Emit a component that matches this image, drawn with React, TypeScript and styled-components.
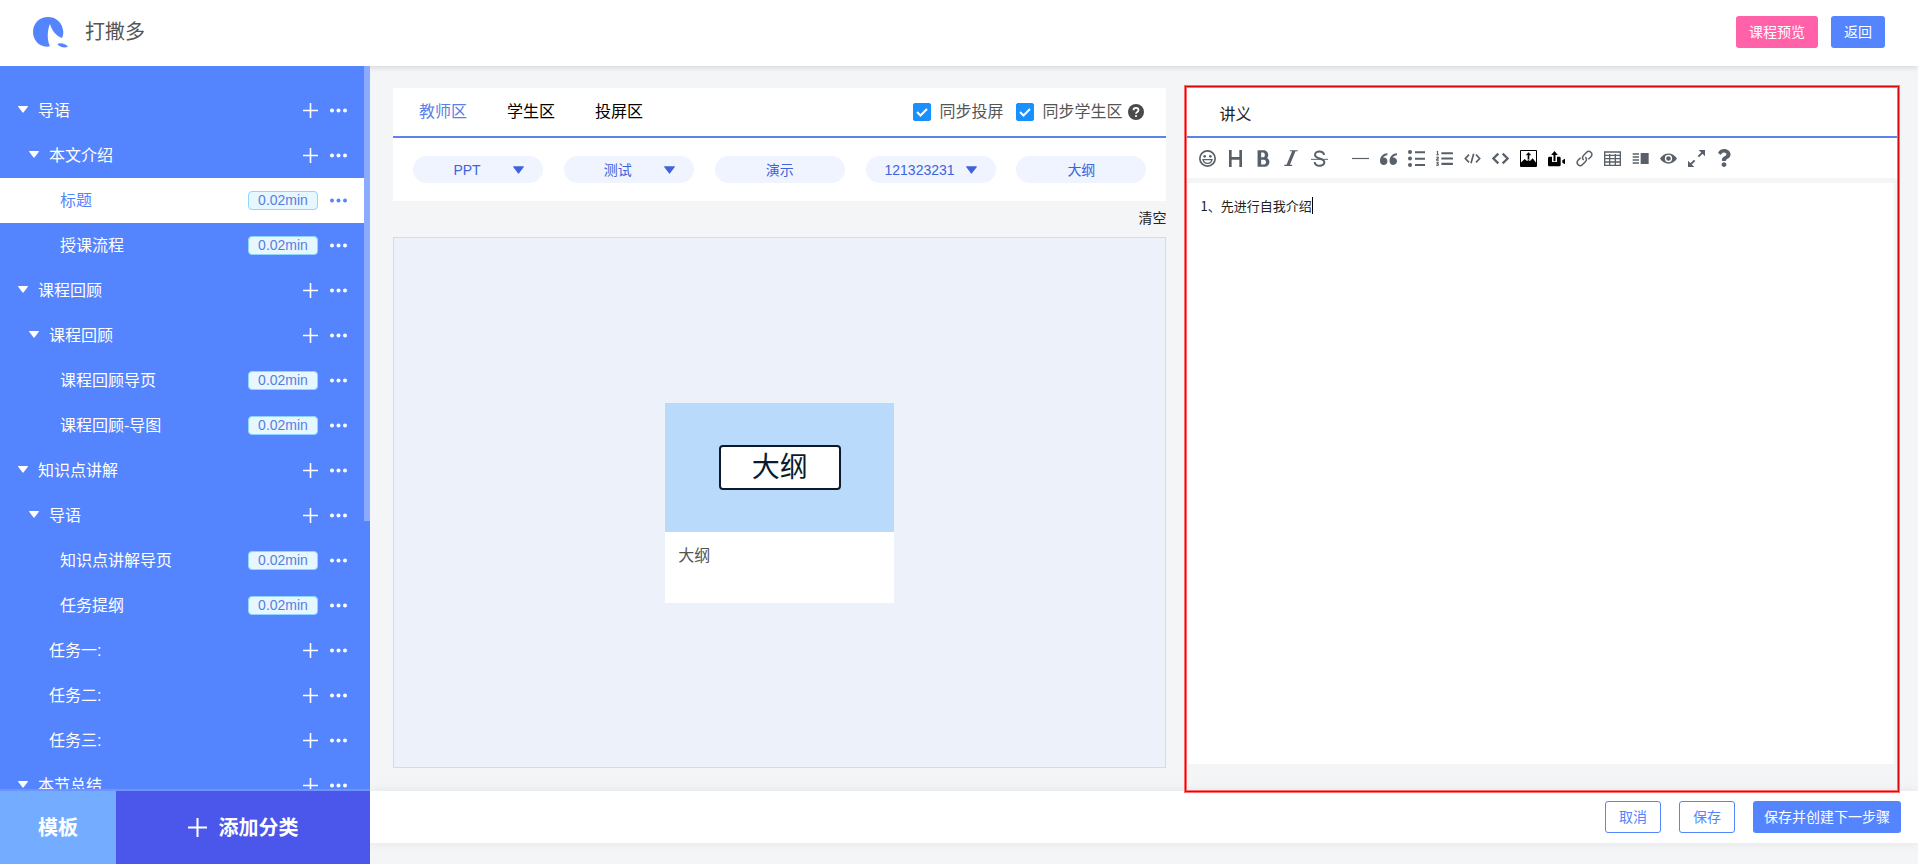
import React, { useState } from "react";
import styled, { createGlobalStyle, css } from "styled-components";
import { ImBold, ImItalic, ImQuotesLeft } from "react-icons/im";
import { FaListOl, FaQuestion } from "react-icons/fa";

const blue = "#5584ff";

const GlobalStyle = createGlobalStyle`
  * { box-sizing: border-box; }
  body {
    margin: 0;
    color: #222;
    background: #f4f5f7;
    font: 14px/20px "Liberation Sans", "Noto Sans CJK SC", sans-serif;
  }
  button, input, textarea { font: inherit; color: inherit; margin: 0; }
  button { padding: 0; border: 0; background: none; cursor: pointer; }
  svg { display: block; flex: none; }
`;

const Page = styled.div`
  display: flex;
  flex-direction: column;
  height: 100vh;
`;

const Header = styled.header`
  display: flex;
  align-items: center;
  height: 66px;
  padding: 0 33px 2px 32px;
  background: #fff;
  box-shadow: 0 1px 6px rgba(0, 21, 41, 0.15);
`;

const CourseName = styled.h1`
  flex: 1;
  margin: 0 0 0 16px;
  color: #555;
  font-size: 20px;
  line-height: 28px;
  font-weight: 400;
`;

const SolidButton = styled.button<{ $tone?: string; $pad?: number }>`
  height: 32px;
  padding: 0 ${(p) => p.$pad ?? 13}px;
  border-radius: 3px;
  color: #fff;
  background: ${(p) => p.$tone ?? blue};
`;

const OutlineButton = styled(SolidButton)`
  border: 1px solid ${blue};
  color: ${blue};
  background: #fff;
`;

const ButtonRow = styled.div<{ $gap: number }>`
  display: flex;
  gap: ${(p) => p.$gap}px;
`;

const Body = styled.div`
  display: flex;
  flex: 1;
  min-height: 0;
`;

const Sidebar = styled.aside`
  position: relative;
  z-index: 1;
  display: flex;
  flex: none;
  flex-direction: column;
  width: 370px;
  background: ${blue};
  color: #fff;
`;

const TreeArea = styled.nav`
  position: relative;
  flex: 1;
  min-height: 0;
  border-bottom: 2px solid #6e95ff;
`;

const Tree = styled.ul`
  height: 100%;
  margin: 0;
  padding: 22px 6px 22px 0;
  overflow-y: auto;
  scrollbar-width: none;
  list-style: none;
`;

const ScrollThumb = styled.div`
  position: absolute;
  top: 0;
  right: 0;
  width: 6px;
  height: 63%;
  background: #8cabff;
`;

const TreeRow = styled.li<{ $indent: number; $active?: boolean }>`
  display: flex;
  align-items: center;
  gap: 12px;
  height: 45px;
  padding: 0 17px 0 ${(p) => p.$indent}px;
  font-size: 16px;
  line-height: 24px;
  ${(p) =>
    p.$active &&
    css`
      color: ${blue};
      background: #fff;
    `}
`;

const TreeLabel = styled.button`
  display: flex;
  flex: 1;
  align-items: center;
  gap: 10px;
  text-align: left;

  > svg { margin-bottom: 3px; }
`;

const Duration = styled.span`
  width: 70px;
  border: 1px solid #91d5ff;
  border-radius: 4px;
  color: #597ee0;
  background: #e6f7ff;
  font-size: 14px;
  line-height: 17px;
  text-align: center;
`;

const SidebarFooter = styled.div`
  display: flex;
  height: 73px;
`;

const FooterAction = styled.button<{ $tone: string; $grow?: boolean }>`
  display: flex;
  flex: ${(p) => (p.$grow ? "1" : "none")};
  align-items: center;
  justify-content: center;
  gap: 12px;
  width: 116px;
  background: ${(p) => p.$tone};
  font-size: 20px;
  font-weight: 700;
`;

const Main = styled.main`
  display: flex;
  flex: 1;
  flex-direction: column;
  min-width: 0;
  padding-bottom: 21px;
`;

const Workspace = styled.div`
  display: grid;
  flex: 1;
  grid-template-columns: 109fr 100fr;
  gap: 21px;
  min-height: 0;
  padding: 22px 21px 0 23px;
`;

const Stage = styled.section`
  display: flex;
  flex-direction: column;
  min-width: 0;
  padding-bottom: 23px;
`;

const PanelHead = styled.div<{ $left: number }>`
  display: flex;
  align-items: center;
  height: 50px;
  padding: 0 22px 0 ${(p) => p.$left}px;
  border-bottom: 2px solid #5b84ea;
  background: #fff;
  font-size: 16px;
  line-height: 24px;
`;

const Tabs = styled.div`
  display: flex;
  flex: 1;
  gap: 40px;
`;

const Tab = styled.button<{ $active: boolean }>`
  color: ${(p) => (p.$active ? "#5b7fe8" : "#000")};
`;

const CheckLabel = styled.label`
  display: flex;
  align-items: center;
  gap: 8px;
  margin-left: 13px;
  color: #555;
`;

const CheckBox = styled.span`
  display: grid;

  > * { grid-area: 1 / 1; }
  > svg { pointer-events: none; }
`;

const CheckInput = styled.input`
  width: 18px;
  height: 18px;
  appearance: none;
  border: 1px solid #1890ff;
  border-radius: 2px;
  background: #fff;

  &:checked { background: #1890ff; }
`;

const HelpBadge = styled.button`
  width: 16px;
  height: 16px;
  margin-left: 6px;
`;

const PillRow = styled.div`
  display: flex;
  justify-content: space-between;
  padding: 18px 20px;
  background: #fff;
`;

const Pill = styled.button<{ $menu?: boolean }>`
  display: flex;
  align-items: center;
  justify-content: center;
  width: 130px;
  height: 27px;
  padding: ${(p) => (p.$menu ? "0 19px 0 8px" : "0")};
  border-radius: 14px;
  color: #3e63dd;
  background: #f0f4ff;
`;

const PillText = styled.span`
  flex: 1;
`;

const ClearRow = styled.div`
  display: flex;
  justify-content: flex-end;
  align-items: center;
  height: 36px;
  padding-bottom: 2px;
`;

const Canvas = styled.div`
  display: flex;
  flex: 1;
  align-items: center;
  justify-content: center;
  border: 1px solid #d6dae2;
  background: #edf2fa;
`;

const SlideCard = styled.figure`
  width: 229px;
  margin: 0;
  background: #fff;
`;

const SlideCover = styled.div`
  display: flex;
  align-items: center;
  justify-content: center;
  height: 129px;
  background: #b9dafa;
`;

const CoverTitle = styled.div`
  width: 122px;
  border: 2px solid #0c1a2b;
  border-radius: 4px;
  color: #0c1a2b;
  background: #fff;
  font-size: 28px;
  line-height: 41px;
  text-align: center;
`;

const SlideCaption = styled.figcaption`
  height: 71px;
  padding: 12px 13px;
  color: #555;
  font-size: 16px;
  line-height: 24px;
`;

const Notes = styled.section`
  position: relative;
  display: flex;
  flex-direction: column;
  min-width: 0;
  margin-bottom: 1px;
  padding-bottom: 26px;
`;

const Highlight = styled.div`
  position: absolute;
  z-index: 2;
  inset: -3px;
  border: 1px solid #ff6b6b;
  box-shadow: inset 0 0 0 1px #d8090d, inset 0 0 0 2px #ff6b6b;
  pointer-events: none;
`;

const NotesTitle = styled.h2`
  margin: 6px 0 0;
  font-size: 16px;
  font-weight: 400;
`;

const Toolbar = styled.div`
  display: flex;
  align-items: center;
  height: 40px;
  padding-left: 6px;
  background: #fff;
  color: #586069;
`;

const Tool = styled.button<{ $dark?: boolean; $spaced?: boolean }>`
  display: flex;
  justify-content: center;
  width: 28px;
  margin-left: ${(p) => (p.$spaced ? 13 : 0)}px;
  color: ${(p) => (p.$dark ? "#000" : "inherit")};
`;

const Editor = styled.div`
  position: relative;
  display: flex;
  flex: 1;
  margin: 5px 3px 0 1px;
`;

const EditorText = styled.textarea`
  flex: 1;
  padding: 12px;
  border: 0;
  outline: 0;
  resize: none;
  background: #fff;
  font-family: "Noto Sans CJK SC", sans-serif;
  font-size: 13px;
  line-height: 22px;
`;

const Caret = styled.span`
  position: absolute;
  top: 14px;
  left: 124px;
  width: 1px;
  height: 17px;
  background: #000;
`;

const ActionBar = styled.footer`
  display: flex;
  justify-content: flex-end;
  padding: 10px 17px;
  background: #fff;
  box-shadow: 0 0 10px rgba(0, 21, 41, 0.08);
`;

const Logo = () => (
  <svg width="37" height="32" viewBox="0 0 111 96" fill={blue}>
    <path d="M54 91C22 97 3 72 3 48 3 20 24 3 48 3c26 0 44 19 46 44 0 10-2 15-5 19C74 60 60 46 54 24c-8 18-10 48 0 67z" />
    <path d="M76 84c10-5 25-1 32 8-12 5-25 1-32-8z" />
  </svg>
);

const DownArrow = ({ width = 10, height = 7 }) => (
  <svg width={width} height={height} viewBox="0 0 30 21" fill="currentColor">
    <path d="M2 0h26c2 0 2 2 1 3L17 19c-1 2-3 2-4 0L1 3C0 2 0 0 2 0z" />
  </svg>
);

const Plus = ({ size = 15 }) => (
  <svg width={size} height={size} viewBox="0 0 15 15" stroke="currentColor" strokeWidth="1.6">
    <path d="M7.5 0v15M0 7.5h15" />
  </svg>
);

const Dots = () => (
  <svg width="17" height="5" viewBox="0 0 17 5" fill="currentColor">
    <circle cx="2" cy="2.5" r="2" />
    <circle cx="8.5" cy="2.5" r="2" />
    <circle cx="15" cy="2.5" r="2" />
  </svg>
);

const Glyph = ({ children }: { children: React.ReactNode }) => (
  <svg width="17" height="17" viewBox="0 0 51 51" fill="none" stroke="currentColor" strokeWidth="5">
    {children}
  </svg>
);

type ToolItem = { name: string; icon: React.ReactNode; dark?: boolean; spaced?: boolean };

const tools: ToolItem[] = [
  {
    name: "表情",
    icon: (
      <Glyph>
        <circle cx="25.5" cy="25.5" r="23" strokeWidth="5" />
        <circle cx="17" cy="19" r="4" fill="currentColor" stroke="none" />
        <circle cx="34" cy="19" r="4" fill="currentColor" stroke="none" />
        <path d="M12 29h27c-3 15-24 15-27 0z" strokeWidth="4" />
      </Glyph>
    ),
  },
  { name: "标题", icon: <Glyph><path d="M10 0v51M41 0v51M10 25h31" strokeWidth="8" /></Glyph> },
  { name: "粗体", icon: <ImBold size={19} /> },
  { name: "斜体", icon: <ImItalic size={18} /> },
  {
    name: "删除线",
    icon: (
      <Glyph>
        <path d="M39 15C38 1 12 1 12 14c0 14 28 9 28 23 0 14-28 14-29-1" strokeWidth="6" />
        <path d="M0 28h51" strokeWidth="3" />
      </Glyph>
    ),
  },
  { name: "分隔线", spaced: true, icon: <Glyph><path d="M0 25.5h51" strokeWidth="3.5" /></Glyph> },
  { name: "引用", icon: <ImQuotesLeft size={17} /> },
  {
    name: "无序列表",
    icon: (
      <Glyph>
        <path d="M21 7h30M21 26h30M21 45h30" strokeWidth="6" />
        <g fill="currentColor" stroke="none">
          <circle cx="6" cy="6" r="6" />
          <circle cx="6" cy="25.5" r="6" />
          <circle cx="6" cy="45" r="6" />
        </g>
      </Glyph>
    ),
  },
  { name: "有序列表", icon: <FaListOl size={17} /> },
  { name: "代码块", icon: <Glyph><path d="M15 14L4 25.5 15 37M36 14l11 11.5L36 37M29 11l-8 29" strokeWidth="5" /></Glyph> },
  { name: "行内代码", icon: <Glyph><path d="M19 11L4 25.5 19 40M32 11l15 14.5L32 40" strokeWidth="7" /></Glyph> },
  {
    name: "上传图片",
    dark: true,
    icon: (
      <Glyph>
        <path d="M1.5 1.5h48v48h-48z" strokeWidth="3" />
        <path d="M2 49V38l12-11 7 6 4-3 5 3 8-8 11 14v10z" fill="currentColor" stroke="none" />
        <path d="M25.5 6l9 10h-6v13h-6V16h-6z" fill="currentColor" stroke="#fff" strokeWidth="1" />
      </Glyph>
    ),
  },
  {
    name: "上传视频",
    dark: true,
    icon: (
      <Glyph>
        <path d="M5 20h7v16h15V20h7c3 0 4 2 4 4v20c0 3-2 5-5 5H5c-3 0-5-2-5-5V25c0-3 2-5 5-5z" fill="currentColor" stroke="none" />
        <path d="M19.5 3l10 12h-7v19h-6V15h-7z" fill="currentColor" stroke="none" />
        <path d="M51 26v17l-8-5v-7z" fill="currentColor" stroke="none" />
      </Glyph>
    ),
  },
  {
    name: "链接",
    icon: (
      <Glyph>
        <path d="M23 30c-5-5-4-10 0-14l9-9c8-8 21 3 13 13l-8 8M28 21c5 5 4 10 0 14l-9 9C11 52-2 41 6 31l8-8" strokeWidth="4.5" />
      </Glyph>
    ),
  },
  { name: "表格", icon: <Glyph><path d="M2 6h47v40H2zM2 16h47M2 26h47M2 36h47M17 12v34M34 12v34" strokeWidth="4" /></Glyph> },
  {
    name: "双栏",
    icon: (
      <Glyph>
        <path d="M2 12h19M2 21h19M2 30h19M2 39h19" strokeWidth="5" />
        <path d="M26 9h24v33H26z" fill="currentColor" stroke="none" />
      </Glyph>
    ),
  },
  {
    name: "预览",
    icon: (
      <Glyph>
        <path d="M0 25.5C12 5 39 5 51 25.5 39 46 12 46 0 25.5z" fill="currentColor" stroke="none" />
        <circle cx="25.5" cy="25.5" r="9" fill="currentColor" stroke="#fff" strokeWidth="4" />
      </Glyph>
    ),
  },
  {
    name: "全屏",
    icon: (
      <Glyph>
        <path d="M31 20L44 7M7 44l13-13" strokeWidth="6" />
        <path d="M32 0h19v19zM0 32v19h19z" fill="currentColor" stroke="none" />
      </Glyph>
    ),
  },
  { name: "帮助", icon: <FaQuestion size={18} /> },
];

type TreeNode = { label: string; level: 1 | 2 | 3; leaf?: boolean; closed?: boolean };

const nodes: TreeNode[] = [
  { label: "导语", level: 1 },
  { label: "本文介绍", level: 2 },
  { label: "标题", level: 3, leaf: true },
  { label: "授课流程", level: 3, leaf: true },
  { label: "课程回顾", level: 1 },
  { label: "课程回顾", level: 2 },
  { label: "课程回顾导页", level: 3, leaf: true },
  { label: "课程回顾-导图", level: 3, leaf: true },
  { label: "知识点讲解", level: 1 },
  { label: "导语", level: 2 },
  { label: "知识点讲解导页", level: 3, leaf: true },
  { label: "任务提纲", level: 3, leaf: true },
  { label: "任务一:", level: 2, closed: true },
  { label: "任务二:", level: 2, closed: true },
  { label: "任务三:", level: 2, closed: true },
  { label: "本节总结", level: 1 },
];

const indentOf = (n: TreeNode) => (n.leaf ? 60 : n.closed ? 49 : n.level === 1 ? 18 : 29);

const pills = [
  { text: "PPT", menu: true },
  { text: "测试", menu: true },
  { text: "演示" },
  { text: "121323231", menu: true },
  { text: "大纲" },
];

const SyncOption = ({ text }: { text: string }) => (
  <CheckLabel>
    <CheckBox>
      <CheckInput type="checkbox" defaultChecked />
      <svg width="18" height="18" viewBox="0 0 18 18" fill="none" stroke="#fff" strokeWidth="2">
        <path d="M4 9l3.500 3.500L14 6" />
      </svg>
    </CheckBox>
    {text}
  </CheckLabel>
);

export default function App() {
  const [selected, setSelected] = useState(2);
  const [tab, setTab] = useState("教师区");

  return (
    <Page>
      <GlobalStyle />
      <Header>
        <Logo />
        <CourseName>打撒多</CourseName>
        <ButtonRow $gap={13}>
          <SolidButton $tone="#ff62a8">课程预览</SolidButton>
          <SolidButton>返回</SolidButton>
        </ButtonRow>
      </Header>
      <Body>
        <Sidebar>
          <TreeArea aria-label="课程目录">
            <Tree>
              {nodes.map((n, i) => (
                <TreeRow key={i} $indent={indentOf(n)} $active={i === selected}>
                  <TreeLabel onClick={() => n.leaf && setSelected(i)}>
                    {!n.leaf && !n.closed && <DownArrow />}
                    {n.label}
                  </TreeLabel>
                  {n.leaf ? (
                    <Duration>0.02min</Duration>
                  ) : (
                    <button aria-label="添加"><Plus /></button>
                  )}
                  <button aria-label="更多"><Dots /></button>
                </TreeRow>
              ))}
            </Tree>
            <ScrollThumb />
          </TreeArea>
          <SidebarFooter>
            <FooterAction $tone="#74adff">模板</FooterAction>
            <FooterAction $tone="#4b56eb" $grow>
              <Plus size={19} />
              添加分类
            </FooterAction>
          </SidebarFooter>
        </Sidebar>
        <Main>
          <Workspace>
            <Stage>
              <PanelHead $left={26}>
                <Tabs role="tablist">
                  {["教师区", "学生区", "投屏区"].map((t) => (
                    <Tab key={t} role="tab" aria-selected={t === tab} $active={t === tab} onClick={() => setTab(t)}>
                      {t}
                    </Tab>
                  ))}
                </Tabs>
                <SyncOption text="同步投屏" />
                <SyncOption text="同步学生区" />
                <HelpBadge aria-label="说明">
                  <svg width="16" height="16" viewBox="0 0 16 16">
                    <circle cx="8" cy="8" r="8" fill="#4a4a4a" />
                    <path d="M5.500 6.200c0-3.200 5-3.200 5 0 0 1.800-2.500 1.800-2.500 3.600" fill="none" stroke="#fff" strokeWidth="1.800" />
                    <circle cx="8" cy="12" r="1.100" fill="#fff" />
                  </svg>
                </HelpBadge>
              </PanelHead>
              <PillRow>
                {pills.map((p) => (
                  <Pill key={p.text} $menu={p.menu}>
                    <PillText>{p.text}</PillText>
                    {p.menu && <DownArrow width={11} height={8} />}
                  </Pill>
                ))}
              </PillRow>
              <ClearRow>
                <button>清空</button>
              </ClearRow>
              <Canvas>
                <SlideCard>
                  <SlideCover>
                    <CoverTitle>大纲</CoverTitle>
                  </SlideCover>
                  <SlideCaption>大纲</SlideCaption>
                </SlideCard>
              </Canvas>
            </Stage>
            <Notes>
              <PanelHead $left={32}>
                <NotesTitle>讲义</NotesTitle>
              </PanelHead>
              <Toolbar role="toolbar">
                {tools.map((t) => (
                  <Tool key={t.name} aria-label={t.name} $dark={t.dark} $spaced={t.spaced}>
                    {t.icon}
                  </Tool>
                ))}
              </Toolbar>
              <Editor>
                <EditorText aria-label="讲义" spellCheck={false} defaultValue="1、先进行自我介绍" />
                <Caret />
              </Editor>
              <Highlight />
            </Notes>
          </Workspace>
          <ActionBar>
            <ButtonRow $gap={18}>
              <OutlineButton>取消</OutlineButton>
              <OutlineButton>保存</OutlineButton>
              <SolidButton $pad={11}>保存并创建下一步骤</SolidButton>
            </ButtonRow>
          </ActionBar>
        </Main>
      </Body>
    </Page>
  );
}
